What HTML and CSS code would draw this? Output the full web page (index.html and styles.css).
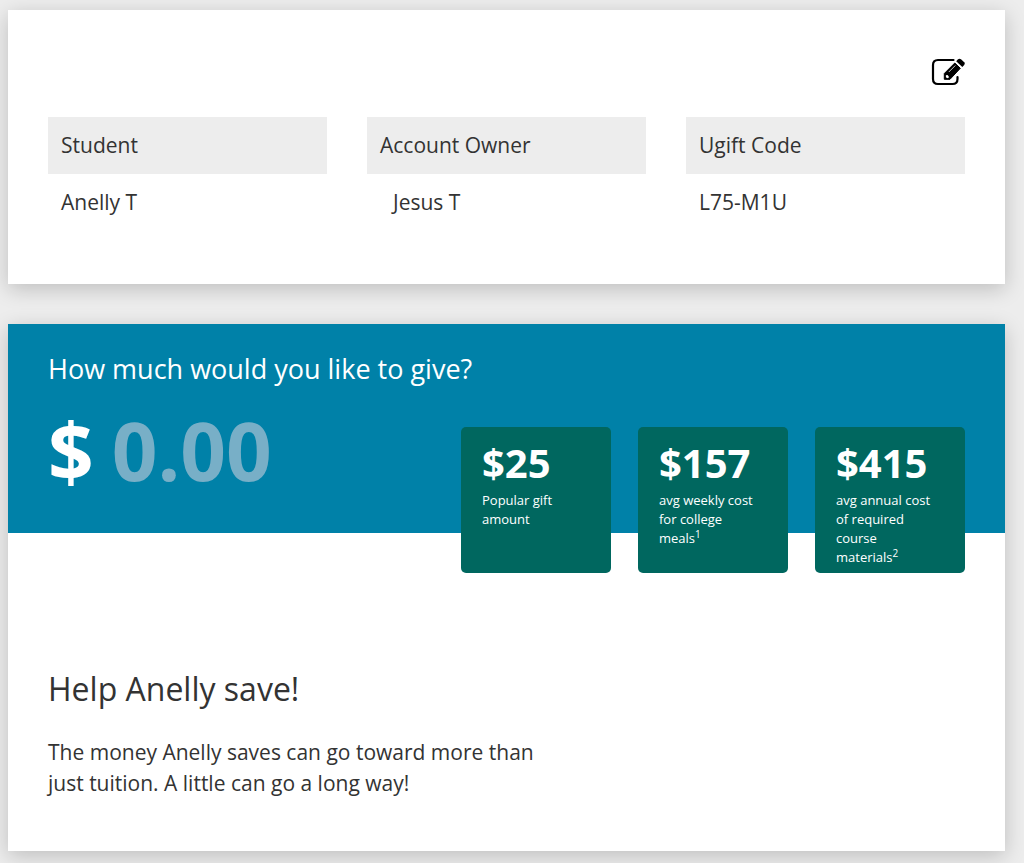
FILE: index.html
```html
<!DOCTYPE html>
<html lang="en">
<head>
  <meta charset="UTF-8">
  <meta name="viewport" content="width=device-width, initial-scale=1.0">
  <title>Ugift</title>
  <link rel="stylesheet" href="styles.css">
</head>
<body>

<main class="page">
  <section class="panel account">
    <div class="account-actions">
      <button type="button" class="edit-button" aria-label="Edit">
        <svg viewBox="0 0 34 28" width="34" height="28" aria-hidden="true">
          <path d="M22.500 2H7Q2 2 2 7V21Q2 26 7 26H21.500Q26.500 26 26.500 21V19" fill="none" stroke="#000" stroke-width="2.200" stroke-linecap="round"/>
          <path d="M13.300 21.300V15.500L23.800 5L29.300 10.300L19 21.300Z" fill="#000" stroke="#000" stroke-linejoin="round"/>
          <path d="M25.200 3.200L27 1.300Q28.500 .2 30 1.300L33.200 4.200Q34.400 5.500 33.200 7L31.300 8.900Z" fill="#000"/>
          <path d="M14.900 17.200L16.600 16.900L18.200 19.300L16.400 20.300L14.900 19.300Z" fill="#fff"/>
          <path d="M17.800 14L24.300 7.500" stroke="#fff" stroke-width=".8"/>
        </svg>
      </button>
    </div>
    <dl class="details">
      <div>
        <dt>Student</dt>
        <dd>Anelly T</dd>
      </div>
      <div>
        <dt>Account Owner</dt>
        <dd class="owner">Jesus T</dd>
      </div>
      <div>
        <dt>Ugift Code</dt>
        <dd>L75-M1U</dd>
      </div>
    </dl>
  </section>

  <section class="panel">
    <form class="gift">
      <h2><label for="amount">How much would you like to give?</label></h2>
      <div class="gift-row">
        <div class="amount">
          <span>$</span>
          <input type="text" id="amount" inputmode="decimal" placeholder="0.00">
        </div>
        <div class="options">
          <button type="button" class="option">
            <strong>$25</strong>
            <span>Popular gift amount</span>
          </button>
          <button type="button" class="option">
            <strong>$157</strong>
            <span>avg weekly cost for college meals<sup>1</sup></span>
          </button>
          <button type="button" class="option">
            <strong>$415</strong>
            <span>avg annual cost of required course materials<sup>2</sup></span>
          </button>
        </div>
      </div>
    </form>
    <div class="message">
      <h1>Help Anelly save!</h1>
      <p>The money Anelly saves can go toward more than just tuition. A little can go a long way!</p>
    </div>
  </section>
</main>

</body>
</html>
```
FILE: styles.css
```css
* {
  box-sizing: border-box;
}
body {
  margin: 0;
  background-color: #ededed;
  color: #333;
  font: 21px/31px "Open Sans", sans-serif;
}
h1, h2, p, dl, dd {
  margin: 0;
  font-weight: 400;
}
.page {
  display: flex;
  flex-direction: column;
  gap: 40px;
  padding: 10px 19px 12px 8px;
}
.panel {
  background-color: #fff;
  box-shadow: 0 5px 20px rgba(0, 0, 0, 0.2);
}

/* Account details */
.account {
  padding: 48px 40px 53px;
}
.account-actions {
  display: flex;
  justify-content: flex-end;
  margin-bottom: 31px;
}
.edit-button {
  display: flex;
  padding: 0;
  border: 0;
  background: none;
  cursor: pointer;
}
.edit-button svg {
  overflow: visible;
}
.details {
  display: grid;
  grid-template-columns: repeat(3, 1fr);
  gap: 40px;
}
.details dt, .details dd {
  padding: 13px;
}
.details dt {
  background-color: #ededed;
}
.details .owner {
  padding-left: 26px;
}

/* Gift amount */
.gift {
  padding: 26px 40px 0;
  background-color: #0081a8;
  color: #fff;
}
.gift h2 {
  font-size: 27px;
  line-height: 37px;
}
/* shorter than the options, which hang over the bottom edge */
.gift-row {
  display: flex;
  justify-content: space-between;
  align-items: flex-start;
  gap: 20px;
  height: 146px;
  padding-top: 8px;
}
.amount {
  display: flex;
  flex: 1;
  gap: 18px;
  min-width: 0;
  font-size: 80px;
  line-height: 109px;
  font-weight: 700;
}
.amount input {
  flex: 1;
  width: 100%;
  min-width: 0;
  padding: 0;
  border: 0;
  outline: 0;
  background: none;
  color: #fff;
  font: inherit;
}
.amount input::placeholder {
  color: #78afc7;
  opacity: 1;
}
.options {
  display: grid;
  grid-template-columns: repeat(3, 150px);
  gap: 27px;
  margin-top: 32px;
}
.option {
  display: flex;
  flex-direction: column;
  height: 146px;
  padding: 8px 26px 0 21px;
  border: 0;
  border-radius: 5px;
  background-color: #00675f;
  color: #fff;
  font-family: inherit;
  text-align: left;
  cursor: pointer;
}
.option strong {
  font-size: 40px;
  line-height: 56px;
}
.option span {
  font-size: 13px;
  line-height: 19px;
}
.option sup {
  font-size: 10px;
  line-height: 0;
}

/* Message */
.message {
  padding: 134px 40px 52px;
}
.message h1 {
  margin-bottom: 26px;
  font-size: 32px;
  line-height: 44px;
}
.message p {
  max-width: 520px;
}
```
